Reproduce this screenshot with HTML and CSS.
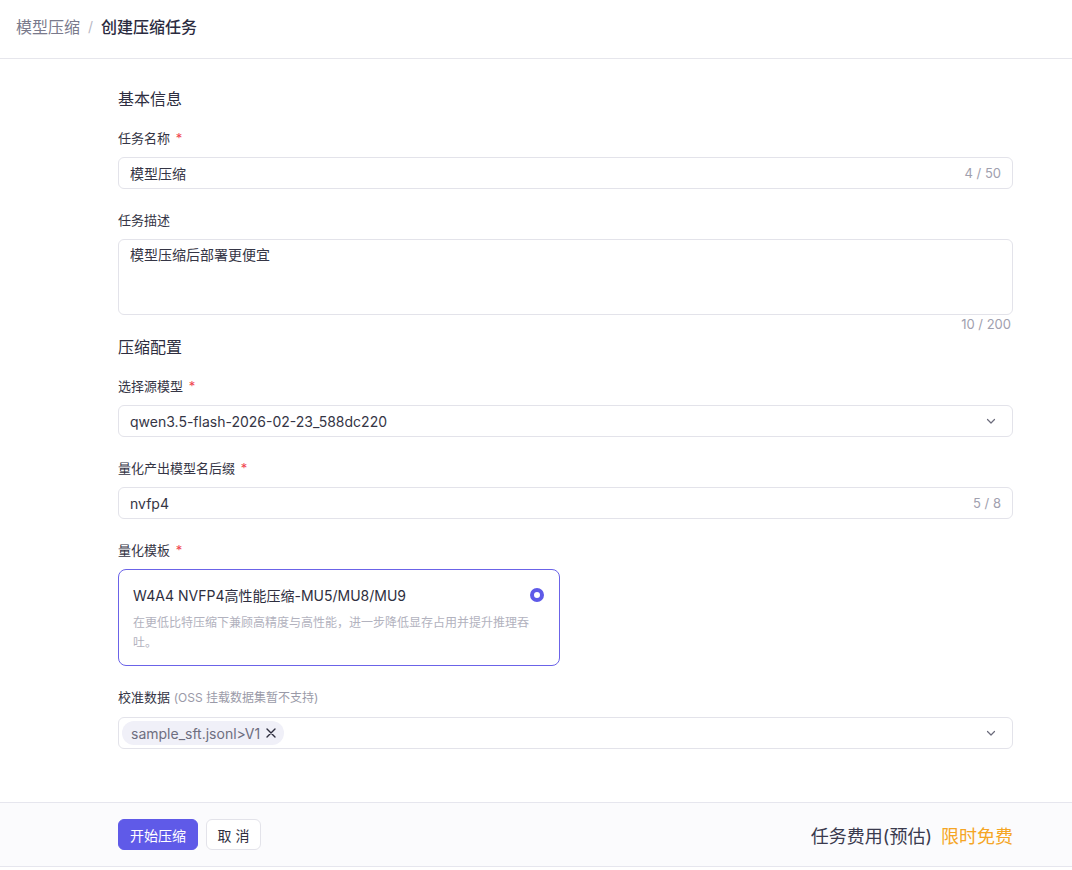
FILE: index.html
```html
<!DOCTYPE html>
<html lang="zh-CN">
<head>
<meta charset="utf-8">
<title>创建压缩任务</title>
<link rel="stylesheet" href="styles.css">
</head>
<body>
<div class="page">
  <header class="header">
    <span class="crumb-parent">模型压缩</span>
    <span class="crumb-sep">/</span>
    <span class="crumb-current">创建压缩任务</span>
  </header>

  <main class="main">
    <div class="form">
      <h2 class="section-title">基本信息</h2>

      <div class="item">
        <div class="label">任务名称 <span class="req">*</span></div>
        <div class="input">
          <span class="value">模型压缩</span>
          <span class="count">4 / 50</span>
        </div>
      </div>

      <div class="item item-textarea">
        <div class="label">任务描述</div>
        <div class="textarea"><span class="value">模型压缩后部署更便宜</span></div>
        <div class="count-below">10 / 200</div>
      </div>

      <h2 class="section-title">压缩配置</h2>

      <div class="item">
        <div class="label">选择源模型 <span class="req">*</span></div>
        <div class="input">
          <span class="value">qwen3.5-flash-2026-02-23_588dc220</span>
          <svg class="chevron" width="12" height="12" viewBox="0 0 12 12"><path d="M2.5 4.5 L6 8 L9.5 4.5" fill="none" stroke="#6b6b7b" stroke-width="1.2" stroke-linecap="round" stroke-linejoin="round"/></svg>
        </div>
      </div>

      <div class="item">
        <div class="label">量化产出模型名后缀 <span class="req">*</span></div>
        <div class="input">
          <span class="value">nvfp4</span>
          <span class="count">5 / 8</span>
        </div>
      </div>

      <div class="item">
        <div class="label">量化模板 <span class="req">*</span></div>
        <div class="card">
          <div class="card-head">
            <span class="card-title">W4A4 NVFP4高性能压缩-MU5/MU8/MU9</span>
            <span class="radio"></span>
          </div>
          <div class="card-desc">在更低比特压缩下兼顾高精度与高性能，进一步降低显存占用并提升推理吞吐。</div>
        </div>
      </div>

      <div class="item">
        <div class="label">校准数据 <span class="hint">(OSS 挂载数据集暂不支持)</span></div>
        <div class="input input-tags">
          <span class="tag">sample_sft.jsonl&gt;V1
            <svg class="tag-x" width="12" height="12" viewBox="0 0 12 12"><path d="M2 2 L10 10 M10 2 L2 10" fill="none" stroke="#2e2e3e" stroke-width="1.4" stroke-linecap="round"/></svg>
          </span>
          <svg class="chevron" width="12" height="12" viewBox="0 0 12 12"><path d="M2.5 4.5 L6 8 L9.5 4.5" fill="none" stroke="#6b6b7b" stroke-width="1.2" stroke-linecap="round" stroke-linejoin="round"/></svg>
        </div>
      </div>
    </div>
  </main>

  <footer class="footer">
    <div class="actions">
      <button class="btn btn-primary">开始压缩</button>
      <button class="btn btn-default">取 消</button>
    </div>
    <div class="cost">
      <span class="cost-label">任务费用(预估)</span>
      <span class="cost-value">限时免费</span>
    </div>
  </footer>
</div>
</body>
</html>
```

FILE: styles.css
```css
* { box-sizing: border-box; }
html, body { margin: 0; padding: 0; }
body {
  font-family: Inter, "Noto Sans CJK SC", sans-serif;
  color: #2e2e3e;
  background: #ffffff;
}
.page {
  width: 1072px;
  height: 870px;
  display: flex;
  flex-direction: column;
}
.header {
  height: 59px;
  flex: none;
  display: flex;
  align-items: center;
  gap: 8px;
  padding: 0 16px 6px;
  border-bottom: 1px solid #e6e6ec;
  font-size: 16px;
}
.crumb-parent { color: #7a7a8c; }
.crumb-sep { color: #b8b8c4; font-size: 14px; }
.crumb-current { color: #2b2b40; font-weight: 500; }

.main {
  flex: 1;
  padding: 28px 59px 0 118px;
}
.form { display: flex; flex-direction: column; }
.section-title {
  margin: 0 0 16px;
  font-size: 16px;
  line-height: 24px;
  font-weight: 400;
  color: #2e2e40;
}
.item { margin-bottom: 20px; }
.item-textarea { margin-bottom: 2px; }
.label {
  font-size: 13px;
  line-height: 22px;
  margin-bottom: 8px;
  color: #353545;
}
.req { color: #f0454f; margin-left: 2px; }
.hint { color: #9a9aa8; font-size: 12px; }

.input {
  height: 32px;
  border: 1px solid #e3e3ea;
  border-radius: 6px;
  display: flex;
  align-items: center;
  justify-content: space-between;
  padding: 0 11px;
  font-size: 14px;
  color: #353545;
}
.count { color: #a0a0ae; font-size: 13px; }
.chevron { margin-right: 4px; }
.textarea {
  height: 76px;
  border: 1px solid #e3e3ea;
  border-radius: 6px;
  padding: 5px 11px;
  font-size: 14px;
  line-height: 20px;
  color: #353545;
}
.count-below {
  text-align: right;
  font-size: 13px;
  line-height: 18px;
  color: #a0a0ae;
  padding-right: 2px;
  margin-top: 0;
}

.card {
  width: 442px;
  border: 1px solid #6b63e8;
  border-radius: 8px;
  padding: 14px 14px 12px;
}
.card-head {
  display: flex;
  align-items: center;
  justify-content: space-between;
  height: 22px;
}
.card-title { font-size: 14px; font-weight: 400; color: #2e2e3e; }
.radio {
  width: 14px;
  height: 14px;
  border-radius: 50%;
  border: 4px solid #5e5ae8;
  background: #fff;
  margin-right: 1px;
}
.card-desc {
  margin-top: 7px;
  font-size: 12px;
  line-height: 20px;
  color: #b2b2be;
}

.input-tags { padding-left: 3px; }
.tag {
  display: inline-flex;
  align-items: center;
  gap: 5px;
  height: 24px;
  padding: 0 7px 0 9px;
  border-radius: 12px;
  background: #f0f0f8;
  color: #6e6e80;
  font-size: 14px;
}
.tag-x { display: block; }

.footer {
  flex: none;
  height: 65px;
  margin-bottom: 3px;
  border-top: 1px solid #e6e6ee;
  border-bottom: 1px solid #e6e6ee;
  background: #fbfbfd;
  display: flex;
  align-items: center;
  justify-content: space-between;
  padding: 0 59px 0 118px;
}
.actions { display: flex; gap: 8px; }
.btn {
  height: 31px;
  border-radius: 6px;
  font-family: inherit;
  font-size: 14px;
  padding: 0;
  white-space: nowrap;
  cursor: pointer;
}
.btn-primary {
  width: 80px;
  background: #5f5ae8;
  color: #ffffff;
  border: 1px solid #5f5ae8;
}
.btn-default {
  width: 55px;
  background: #ffffff;
  color: #2e2e3e;
  border: 1px solid #e3e3ea;
}
.cost { display: flex; gap: 9px; font-size: 18px; font-weight: 400; }
.cost-label { color: #3a3a4e; }
.cost-value { color: #f5a524; }
```
